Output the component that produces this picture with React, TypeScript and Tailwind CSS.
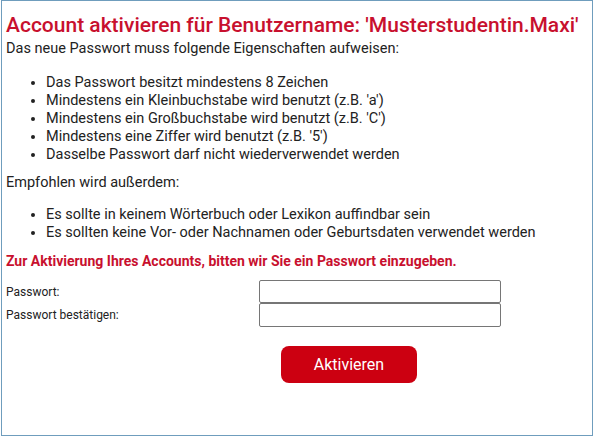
export default function App() {
  return (
    <div className="w-[594px] h-[437px] bg-white font-['Roboto',_'Liberation_Sans',_sans-serif] text-[#222]">
      <div className="ml-px w-[592px] h-[436px] border border-[#6f9dbd] px-[4px] pt-[10px]">
        <h1 className="text-[21px] leading-[28px] font-medium text-[#c8102e] whitespace-nowrap">
          Account aktivieren für Benutzername: 'Musterstudentin.Maxi'
        </h1>
        <p className="text-[14.5px] leading-[18px] mt-px">
          Das neue Passwort muss folgende Eigenschaften aufweisen:
        </p>
        <ul className="list-disc pl-[40px] mt-[16px] text-[14.5px] leading-[18px]">
          <li>Das Passwort besitzt mindestens 8 Zeichen</li>
          <li>Mindestens ein Kleinbuchstabe wird benutzt (z.B. 'a')</li>
          <li>Mindestens ein Großbuchstabe wird benutzt (z.B. 'C')</li>
          <li>Mindestens eine Ziffer wird benutzt (z.B. '5')</li>
          <li>Dasselbe Passwort darf nicht wiederverwendet werden</li>
        </ul>
        <p className="text-[14.5px] leading-[18px] mt-[10px]">Empfohlen wird außerdem:</p>
        <ul className="list-disc pl-[40px] mt-[14px] text-[14.5px] leading-[18px]">
          <li>Es sollte in keinem Wörterbuch oder Lexikon auffindbar sein</li>
          <li>Es sollten keine Vor- oder Nachnamen oder Geburtsdaten verwendet werden</li>
        </ul>
        <p className="text-[14px] leading-[18px] font-bold text-[#c8102e] mt-[10px]">
          Zur Aktivierung Ihres Accounts, bitten wir Sie ein Passwort einzugeben.
        </p>
        <div className="grid grid-cols-[253px_242px] mt-[10px] text-[12px] items-center">
          <label htmlFor="pw1">Passwort:</label>
          <input id="pw1" type="password" className="h-[23px] border border-[#767676] rounded-[2px]" />
          <label htmlFor="pw2">Passwort bestätigen:</label>
          <input id="pw2" type="password" className="h-[24px] border border-[#767676] rounded-[2px]" />
        </div>
        <div className="mt-[19px] pl-[275px]">
          <button className="w-[136px] h-[37px] rounded-[8px] bg-[#cc0011] text-white text-[16px]">
            Aktivieren
          </button>
        </div>
      </div>
    </div>
  );
}
